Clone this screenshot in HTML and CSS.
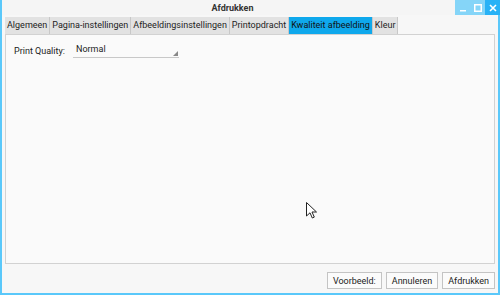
FILE: index.html
```html
<!DOCTYPE html>
<html lang="nl">
<head>
  <meta charset="UTF-8" />
  <title>Afdrukken</title>
  <link rel="stylesheet" href="styles.css">
</head>
<body>
  <div class="window">
    <div class="titlebar">
      <div class="title">Afdrukken</div>
      <div class="win-buttons">
        <div class="wbtn min"><svg width="8" height="8" viewBox="0 0 8 8"><rect x="1" y="6" width="6" height="1.5" fill="#fff"/></svg></div>
        <div class="wbtn max"><svg width="8" height="8" viewBox="0 0 8 8"><rect x="0.75" y="0.75" width="6.5" height="6.5" fill="none" stroke="#fff" stroke-width="1.5"/></svg></div>
        <div class="wbtn close"><svg width="8" height="8" viewBox="0 0 8 8"><path d="M1 1L7 7M7 1L1 7" stroke="#fff" stroke-width="1.6"/></svg></div>
      </div>
    </div>

    <div class="content">
      <div class="tabs">
        <div class="tab">Algemeen</div>
        <div class="tab">Pagina-instellingen</div>
        <div class="tab">Afbeeldingsinstellingen</div>
        <div class="tab">Printopdracht</div>
        <div class="tab active">Kwaliteit afbeelding</div>
        <div class="tab">Kleur</div>
      </div>
      <div class="panel">
        <div class="field">
          <span class="label">Print Quality:</span>
          <div class="combo">
            <span>Normal</span>
            <svg class="arrow" width="5" height="5" viewBox="0 0 5 5"><path d="M5 0V5H0Z" fill="#888"/></svg>
          </div>
        </div>
      </div>
      <div class="actions">
        <button class="btn">Voorbeeld:</button>
        <button class="btn">Annuleren</button>
        <button class="btn">Afdrukken</button>
      </div>
    </div>

    <svg class="cursor" width="12" height="18" viewBox="0 0 12 18">
      <path d="M0.5 0.5V14L4 10.8L6.3 16L8.3 15.1L6 10H10.5Z" fill="#fff" stroke="#222" stroke-width="1"/>
    </svg>
  </div>
</body>
</html>
```

FILE: styles.css
```css
body {
  margin: 0;
  padding: 0;
  font-family: Roboto, "Liberation Sans", sans-serif;
  font-size: 9px;
  color: #222;
}
.window {
  width: 500px;
  height: 295px;
  box-sizing: border-box;
  border: 2px solid #5ac8fa;
  border-top: none;
  background: #f7f7f7;
  display: flex;
  flex-direction: column;
  position: relative;
}
.titlebar {
  height: 15px;
  display: flex;
  align-items: center;
  position: relative;
  background: #f5f5f5;
}
.title {
  flex: 1;
  text-align: center;
  font-weight: bold;
  color: #333;
  padding-left: 8px;
}
.win-buttons {
  display: flex;
  height: 15px;
  margin-right: -2px;
}
.wbtn {
  width: 15px;
  height: 15px;
  display: flex;
  align-items: center;
  justify-content: center;
}
.wbtn.min, .wbtn.max {
  background: #85d5f8;
}
.wbtn.close {
  background: #28b2f6;
}
.content {
  flex: 1;
  display: flex;
  flex-direction: column;
  padding: 2px 3px 4px 3px;
}
.tabs {
  display: flex;
}
.tab {
  height: 17px;
  line-height: 17px;
  padding: 0 2px;
  background: #e2e2e2;
  border-right: 1px solid #c8c8c8;
  color: #222;
}
.tab.active {
  background: #0fa8ec;
  color: #111;
}
.panel {
  flex: 1;
  border: 1px solid #d2d2d2;
  background: #fafafa;
  padding: 8px 8px;
}
.field {
  display: flex;
  align-items: center;
}
.label {
  width: 59px;
}
.combo {
  width: 103px;
  height: 14px;
  padding-left: 3px;
  border-bottom: 1px solid #c8c8c8;
  position: relative;
  line-height: 13px;
}
.combo .arrow {
  position: absolute;
  right: 1px;
  bottom: 1px;
}
.actions {
  display: flex;
  justify-content: flex-end;
  gap: 4px;
  padding-top: 8px;
}
.btn {
  font-family: Roboto, "Liberation Sans", sans-serif;
  font-size: 9px;
  color: #222;
  background: #fbfbfb;
  border: 1px solid #c4c4c4;
  height: 17px;
  padding: 0 5px;
  margin: 0;
}
.cursor {
  position: absolute;
  left: 304px;
  top: 202px;
}
```
